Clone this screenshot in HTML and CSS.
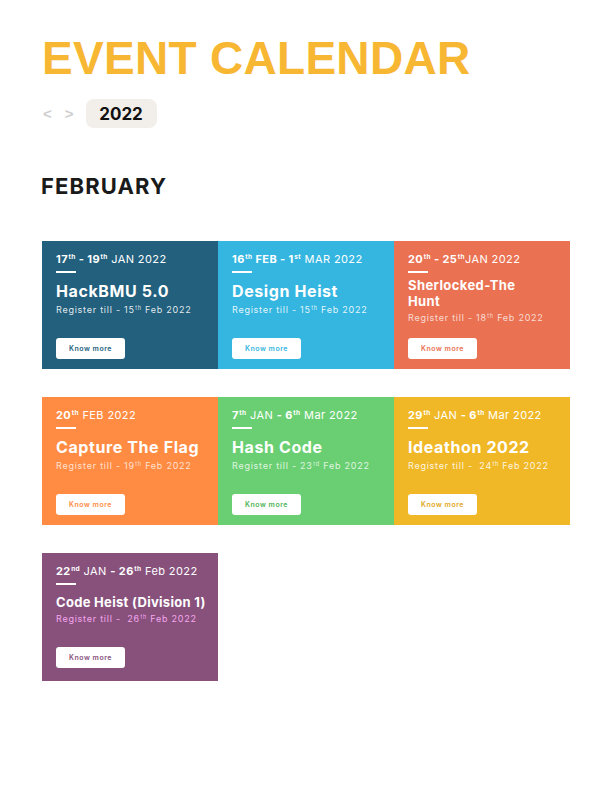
FILE: index.html
```html
<!DOCTYPE html>
<html>
<head>
<meta charset="utf-8">
<link rel="stylesheet" href="styles.css">
</head>
<body>
<div class="page">
  <h1 class="title">EVENT CALENDAR</h1>
  <div class="nav">
    <span class="arrow">&lt;</span>
    <span class="arrow">&gt;</span>
    <span class="year">2022</span>
  </div>
  <h2 class="month">FEBRUARY</h2>
  <div class="grid">
    <div class="card c1">
      <div class="date"><b>17<sup>th</sup> - 19<sup>th</sup></b> JAN 2022</div>
      <div class="bar"></div>
      <div class="name">HackBMU 5.0</div>
      <div class="reg">Register till - 15<sup>th</sup> Feb 2022</div>
      <a class="btn">Know more</a>
    </div>
    <div class="card c2">
      <div class="date"><b>16<sup>th</sup> FEB - 1<sup>st</sup></b> MAR 2022</div>
      <div class="bar"></div>
      <div class="name">Design Heist</div>
      <div class="reg">Register till - 15<sup>th</sup> Feb 2022</div>
      <a class="btn">Know more</a>
    </div>
    <div class="card c3">
      <div class="date"><b>20<sup>th</sup> - 25<sup>th</sup></b>JAN 2022</div>
      <div class="bar"></div>
      <div class="name small wrap">Sherlocked-The Hunt</div>
      <div class="reg">Register till - 18<sup>th</sup> Feb 2022</div>
      <a class="btn">Know more</a>
    </div>
    <div class="card c4">
      <div class="date"><b>20<sup>th</sup></b> FEB 2022</div>
      <div class="bar"></div>
      <div class="name">Capture The Flag</div>
      <div class="reg">Register till - 19<sup>th</sup> Feb 2022</div>
      <a class="btn">Know more</a>
    </div>
    <div class="card c5">
      <div class="date"><b>7<sup>th</sup></b> JAN <b>- 6<sup>th</sup></b> Mar 2022</div>
      <div class="bar"></div>
      <div class="name">Hash Code</div>
      <div class="reg">Register till - 23<sup>rd</sup> Feb 2022</div>
      <a class="btn">Know more</a>
    </div>
    <div class="card c6">
      <div class="date"><b>29<sup>th</sup></b> JAN <b>- 6<sup>th</sup></b> Mar 2022</div>
      <div class="bar"></div>
      <div class="name">Ideathon 2022</div>
      <div class="reg">Register till - &nbsp;24<sup>th</sup> Feb 2022</div>
      <a class="btn">Know more</a>
    </div>
    <div class="card c7">
      <div class="date"><b>22<sup>nd</sup></b> JAN <b>- 26<sup>th</sup></b> Feb 2022</div>
      <div class="bar"></div>
      <div class="name small">Code Heist (Division 1)</div>
      <div class="reg">Register till - &nbsp;26<sup>th</sup> Feb 2022</div>
      <a class="btn">Know more</a>
    </div>
  </div>
</div>
</body>
</html>
```
FILE: styles.css
```css
* { box-sizing: border-box; }
body {
  margin: 0;
  background: #fff;
  font-family: Inter, "Noto Sans", sans-serif;
}
.page {
  padding: 35px 0 0 42px;
}
.title {
  margin: 0;
  font-family: "Liberation Sans", Arial, sans-serif;
  font-weight: 700;
  font-size: 46px;
  line-height: 46px;
  letter-spacing: 0.3px;
  color: #f7b733;
}
.nav {
  display: flex;
  align-items: center;
  margin-top: 18px;
  height: 29px;
}
.arrow {
  font-family: "Liberation Sans", Arial, sans-serif;
  font-weight: 700;
  font-size: 15px;
  color: #cfcfcf;
  margin-right: 12px;
  margin-left: 1px;
}
.year {
  width: 71px;
  height: 29px;
  border-radius: 8px;
  background: #f2efeb;
  display: flex;
  align-items: center;
  justify-content: center;
  font-weight: 700;
  font-size: 17px;
  color: #111;
}
.month {
  margin: 47px 0 0 -1px;
  font-weight: 700;
  font-size: 22px;
  line-height: 22px;
  color: #1a1a1a;
  letter-spacing: 1.1px;
}
.grid {
  margin-top: 44px;
  display: grid;
  grid-template-columns: repeat(3, 176px);
  row-gap: 28px;
}
.card {
  height: 128px;
  padding: 11px 14px 10px 14px;
  color: #fff;
  display: flex;
  flex-direction: column;
  align-items: flex-start;
}
.date {
  font-size: 11px;
  line-height: 14px;
  letter-spacing: 0.4px;
  white-space: nowrap;
}
.date b { font-weight: 700; }
sup {
  font-size: 6.5px;
  line-height: 0;
  vertical-align: 4px;
  margin-left: 0.5px;
}
.bar {
  width: 20px;
  height: 2px;
  background: #fff;
  margin-top: 5px;
}
.name {
  margin-top: 8px;
  font-size: 16px;
  line-height: 20px;
  font-weight: 700;
  letter-spacing: 0.6px;
  white-space: nowrap;
}
.name.small {
  font-size: 13px;
  line-height: 16px;
  margin-top: 9px;
  letter-spacing: 0.3px;
}
.name.wrap {
  white-space: normal;
  width: 130px;
  margin-top: 4px;
  letter-spacing: 0.4px;
}
.reg {
  margin-top: 3px;
  font-size: 9px;
  line-height: 12px;
  letter-spacing: 0.75px;
  color: rgba(255, 255, 255, 0.88);
  white-space: nowrap;
}
.reg sup { font-size: 5.5px; vertical-align: 3px; }
.btn {
  margin-top: auto;
  flex-shrink: 0;
  width: 69px;
  height: 21px;
  border-radius: 3px;
  background: #fff;
  display: flex;
  align-items: center;
  justify-content: center;
  font-size: 7px;
  font-weight: 600;
  letter-spacing: 0.5px;
}
.c1 { background: #22607d; }
.c1 .btn { color: #22607d; }
.c2 { background: #34b6e1; }
.c2 .btn { color: #34b6e1; }
.c3 { background: #ea7151; }
.c3 .btn { color: #ea7151; }
.c3 .reg { color: rgba(255, 255, 255, 0.75); }
.c4 { background: #ff8c42; }
.c4 .btn { color: #ff8c42; }
.c4 .reg { color: rgba(255, 255, 255, 0.75); }
.c5 { background: #6acf72; }
.c5 .btn { color: #4fb457; }
.c5 .reg { color: rgba(255, 255, 255, 0.8); }
.c6 { background: #f0b826; }
.c6 .btn { color: #e0a818; }
.c7 { background: #88517c; padding-bottom: 13px; }
.c7 .btn { color: #88517c; }
.c7 .reg { color: #f4a6ee; }
```
